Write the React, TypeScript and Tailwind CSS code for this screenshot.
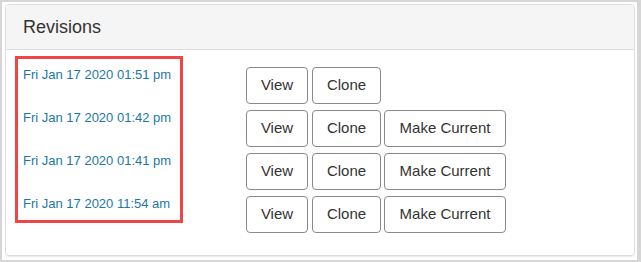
const revisions = [
  { date: "Fri Jan 17 2020 01:51 pm", current: true },
  { date: "Fri Jan 17 2020 01:42 pm", current: false },
  { date: "Fri Jan 17 2020 01:41 pm", current: false },
  { date: "Fri Jan 17 2020 11:54 am", current: false },
];

function Btn({ label, w }: { label: string; w: string }) {
  return (
    <button
      className={`${w} h-[37px] flex items-center justify-center border border-[#8a8a8a] rounded-[4px] bg-white text-[15px] text-[#333]`}
    >
      {label}
    </button>
  );
}

export default function App() {
  return (
    <div
      className="w-[641px] h-[262px] bg-[#d6d6d6] pt-[2px] pl-[2px] pr-[4px] pb-[2px]"
      style={{ fontFamily: '"Liberation Sans", Arial, sans-serif' }}
    >
      <div className="h-full bg-white pt-[2px] pl-[3px] pr-[2px] pb-[4px]">
        <div className="h-full flex flex-col border border-[#dddddd] rounded-[4px] shadow-[0_1px_1px_rgba(0,0,0,0.08)] overflow-hidden">
          {/* Heading */}
          <div className="h-[45px] flex items-center pl-[17px] bg-[#f5f5f5] border-b border-[#dddddd]">
            <span className="text-[18px] text-[#333]">Revisions</span>
          </div>

          {/* Body */}
          <div className="flex items-start pt-[6px] pl-[9px]">
            {/* highlighted dates */}
            <div className="w-[168px] h-[167px] border-[3px] border-[#f04545] pt-[7px] pl-[5px]">
              {revisions.map((r) => (
                <div key={r.date} className="h-[43px] text-[13px] leading-[17px] text-[#1b78a6]">
                  {r.date}
                </div>
              ))}
            </div>

            {/* actions */}
            <div className="ml-[63px] mt-[11px] flex flex-col gap-[6px]">
              {revisions.map((r) => (
                <div key={r.date} className="flex">
                  <Btn label="View" w="w-[62px]" />
                  <div className="ml-[4px]">
                    <Btn label="Clone" w="w-[69px]" />
                  </div>
                  {!r.current && (
                    <div className="ml-[3px]">
                      <Btn label="Make Current" w="w-[122px]" />
                    </div>
                  )}
                </div>
              ))}
            </div>
          </div>
        </div>
      </div>
    </div>
  );
}
